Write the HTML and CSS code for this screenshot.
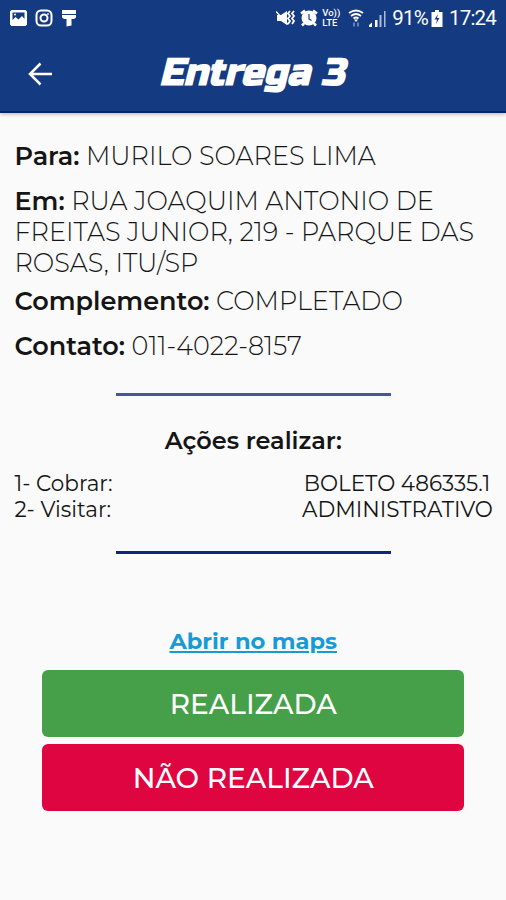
FILE: index.html
```html
<!DOCTYPE html>
<html lang="pt-BR">
<head>
    <meta charset="UTF-8">
    <meta name="viewport" content="width=device-width, initial-scale=1.0">
    <title>Entrega 3</title>
    <link rel="stylesheet" href="styles.css">
</head>
<body>
    <header class="app-header">
        <div class="status-bar">
            <div class="status-left">
                <svg class="icon" width="17" height="16" viewBox="0 0 17 16">
                    <path fill-rule="evenodd" d="M1.500 0h14L17 1.500v13L15.500 16h-14L0 14.500v-13zM2.500 2.500V10L5.500 7l3 2.500L12 6l2.500 3V2.500z" fill="#fff"/>
                    <circle cx="5" cy="4.500" r="1" fill="#fff"/>
                </svg>
                <svg class="icon" width="18" height="18" viewBox="0 0 18 18" fill="none" stroke="#fff" stroke-width="2">
                    <rect x="1.500" y="1.500" width="15" height="15" rx="4.500"/>
                    <circle cx="9" cy="9" r="3.500"/>
                    <circle cx="13" cy="5" r="0.600" stroke-width="1"/>
                </svg>
                <svg class="icon" width="16" height="18" viewBox="0 0 16 18" fill="#fff">
                    <path d="M1 1h14v4H1zM1 6h14v2.500l-2 1.500h-2.500v6.500l-5 1V10H3L1 8.500z"/>
                </svg>
            </div>
            <div class="status-right">
                <svg class="icon" width="20" height="18" viewBox="0 0 20 18">
                    <path d="M1 6h4l6-4v14l-6-4H1z" fill="#fff"/>
                    <path d="M0 2.500l12 13" stroke="#fff" stroke-width="1.500"/>
                    <path d="M14 2l-2 2.500 2 2.500-2 2.500 2 2.500-2 3M18 2l-2 2.500 2 2.500-2 2.500 2 2.500-2 3" fill="none" stroke="#fff" stroke-width="1.800"/>
                </svg>
                <svg class="icon icon-alarm" width="18" height="18" viewBox="0 0 18 18">
                    <circle cx="9" cy="9" r="7.500" fill="#fff"/>
                    <path d="M1 4.500l4-3M17 4.500l-4-3M4 14.500l-2 2M14 14.500l2 2" stroke="#fff" stroke-width="2.500"/>
                    <path d="M9 5v5l2.500 1.500" fill="none" stroke="#143a82" stroke-width="1.200"/>
                </svg>
                <div class="volte">Vo))<br>LTE</div>
                <svg class="icon icon-wifi" width="16" height="18" viewBox="0 0 16 18" fill="none" stroke="#fff" stroke-width="1.800">
                    <path d="M1 4q7-5 14 0M3 7q5-4 10 0M5.500 9.500q2.500-2 5 0"/>
                    <path d="M6 10.500h4L8 13z" fill="#fff" stroke="none"/>
                    <path d="M6 13.500v4M10 13.500v4" stroke="#6f8bbd"/>
                </svg>
                <svg class="icon" width="17" height="17" viewBox="0 0 17 17">
                    <path d="M0 15l3-2.500V17H0zM6 10h2.500v7H6z" fill="#fff"/>
                    <path d="M10.500 5H12.500v12h-2zM15 1h1.500v16H15z" fill="#a9bbd8"/>
                </svg>
                <span class="battery-level">91%</span>
                <svg class="icon icon-battery" width="12" height="17" viewBox="0 0 12 17">
                    <path d="M4 0h4v2h3.500v15H.500V2H4z" fill="#fff"/>
                    <path d="M7 4l-3.500 5.500H6L5 14l3.500-6H6z" fill="#143a82"/>
                </svg>
                <span class="clock">17:24</span>
            </div>
        </div>
        <div class="title-bar">
            <a href="#" class="back-button" aria-label="Voltar">
                <svg width="24" height="24" viewBox="0 0 24 24" fill="none" stroke="#fff" stroke-width="2.500">
                    <path d="M24 12H2.500M12.500 1.500L2 12l10.500 10.500"/>
                </svg>
            </a>
            <h1 class="title">Entrega 3</h1>
        </div>
    </header>

    <main class="content">
        <p class="field"><b>Para:</b> MURILO SOARES LIMA</p>
        <p class="field field-address"><b>Em:</b> RUA JOAQUIM ANTONIO DE FREITAS JUNIOR, 219 - PARQUE DAS ROSAS, ITU/SP</p>
        <p class="field"><b>Complemento:</b> COMPLETADO</p>
        <p class="field"><b>Contato:</b> 011-4022-8157</p>

        <hr class="divider">

        <h2 class="actions-title">Ações realizar:</h2>
        <div class="actions">
            <div class="action"><span>1- Cobrar:</span><span class="action-value">BOLETO 486335.1</span></div>
            <div class="action"><span>2- Visitar:</span><span class="action-value">ADMINISTRATIVO</span></div>
        </div>

        <hr class="divider divider-dark">

        <a href="#" class="maps-link">Abrir no maps</a>
        <button class="btn btn-done">REALIZADA</button>
        <button class="btn btn-fail">NÃO REALIZADA</button>
    </main>
</body>
</html>
```
FILE: styles.css
```css
* {
    box-sizing: border-box;
}

body {
    margin: 0;
    min-height: 900px;
    background-color: #fafafa;
    color: #151515;
    font-family: Montserrat, Inter, sans-serif;
}

.app-header {
    height: 113px;
    background-color: #143a82;
    border-bottom: 2px solid #05236f;
    box-shadow: 0 1px 4px rgba(0, 0, 0, 0.3);
    color: #fff;
}

.status-bar {
    height: 36px;
    padding: 0 10px;
    display: flex;
    justify-content: space-between;
    align-items: center;
    font-family: Roboto, sans-serif;
    font-size: 20.5px;
    letter-spacing: -0.8px;
}

.status-left,
.status-right {
    display: flex;
    align-items: center;
}

.status-left {
    gap: 8px;
}

.icon {
    display: block;
    flex: none;
}

.icon-alarm {
    margin-left: 4px;
}

.volte {
    width: 18px;
    margin: 0 8px 0 4px;
    font-size: 9.5px;
    font-weight: 500;
    letter-spacing: 0;
    line-height: 10px;
    white-space: nowrap;
}

.icon-wifi {
    margin-right: 5px;
}

.battery-level {
    margin-left: 6px;
}

.icon-battery {
    margin: 0 6px 0 3px;
}

.title-bar {
    height: 75px;
    padding: 0 28px;
    display: flex;
    align-items: center;
}

.back-button {
    display: flex;
}

.title {
    margin: 0 0 2px 107px;
    font-family: "Russo One", Inter, sans-serif;
    font-size: 38px;
    font-weight: 900;
    font-style: italic;
    line-height: 44px;
    white-space: nowrap;
}

.content {
    padding: 27px 14px 0 14.5px;
    display: flex;
    flex-direction: column;
}

.field {
    margin: 0 0 14px;
    font-size: 25.5px;
    font-weight: 300;
    line-height: 31px;
}

.field b {
    font-weight: 600;
}

.field-address {
    margin-bottom: 7px;
}

.divider {
    width: 275px;
    height: 3px;
    margin: 17.5px auto 0;
    border: 0;
    background-color: #4a5796;
}

.divider-dark {
    margin-top: 29px;
    background-color: #14247a;
}

.actions-title {
    margin: 30.5px 0 0;
    font-size: 24px;
    font-weight: 600;
    line-height: 30px;
    text-align: center;
}

.actions {
    margin-top: 15px;
}

.action {
    display: flex;
    justify-content: space-between;
    font-size: 21.5px;
    line-height: 25.5px;
}

.action-value {
    width: 190px;
    text-align: center;
    white-space: nowrap;
}

.maps-link {
    align-self: center;
    margin-top: 72px;
    color: #179bd7;
    font-size: 22.6px;
    font-weight: 700;
    line-height: 30px;
}

.btn {
    width: 422px;
    height: 67px;
    margin: 14px auto 0;
    padding: 0;
    border: 0;
    border-radius: 6px;
    color: #fff;
    font-family: inherit;
    font-size: 28px;
    font-weight: 500;
}

.btn-done {
    background-color: #45a049;
}

.btn-fail {
    margin-top: 7px;
    background-color: #df0540;
}
```
